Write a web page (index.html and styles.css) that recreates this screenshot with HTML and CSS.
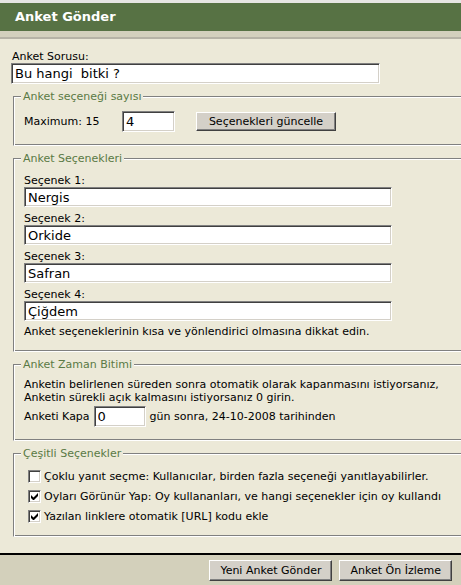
FILE: index.html
```html
<!DOCTYPE html>
<html lang="tr">
<head>
<meta charset="utf-8">
<title>Anket Gönder</title>
<link rel="stylesheet" href="styles.css">
</head>
<body>
<div class="page">
  <div class="topline"></div>
  <div class="header"><h1 class="title">Anket Gönder</h1></div>
  <div class="band"></div>
  <div class="content">
    <div class="label">Anket Sorusu:</div>
    <input class="field field-question" type="text" value="Bu hangi  bitki ?">

    <fieldset class="fs fs-count">
      <legend class="legend">Anket seçeneği sayısı</legend>
      <div class="count-row">
        <span class="count-text">Maximum: 15</span>
        <input class="field field-small" type="text" value="4">
        <button class="btn btn-update" type="button">Seçenekleri güncelle</button>
      </div>
    </fieldset>

    <fieldset class="fs fs-options">
      <legend class="legend">Anket Seçenekleri</legend>
      <div class="opt-label">Seçenek 1:</div>
      <input class="field field-option" type="text" value="Nergis">
      <div class="opt-label">Seçenek 2:</div>
      <input class="field field-option" type="text" value="Orkide">
      <div class="opt-label">Seçenek 3:</div>
      <input class="field field-option" type="text" value="Safran">
      <div class="opt-label">Seçenek 4:</div>
      <input class="field field-option" type="text" value="Çiğdem">
      <div class="note">Anket seçeneklerinin kısa ve yönlendirici olmasına dikkat edin.</div>
    </fieldset>

    <fieldset class="fs fs-time">
      <legend class="legend">Anket Zaman Bitimi</legend>
      <div class="time-text">Anketin belirlenen süreden sonra otomatik olarak kapanmasını istiyorsanız,<br>Anketin sürekli açık kalmasını istiyorsanız 0 girin.</div>
      <div class="time-row">
        <span>Anketi Kapa</span>
        <input class="field field-small field-days" type="text" value="0">
        <span>gün sonra, 24-10-2008 tarihinden</span>
      </div>
    </fieldset>

    <fieldset class="fs fs-misc">
      <legend class="legend">Çeşitli Seçenekler</legend>
      <div class="check-row">
        <span class="check"></span>
        <span>Çoklu yanıt seçme: Kullanıcılar, birden fazla seçeneği yanıtlayabilirler.</span>
      </div>
      <div class="check-row">
        <span class="check"><svg class="tick" viewBox="0 0 7 7" width="7" height="7"><path d="M0 2v3l2 2h1l4-4V0L2.5 4.5z" fill="#000"/></svg></span>
        <span>Oyları Görünür Yap: Oy kullananları, ve hangi seçenekler için oy kullandı</span>
      </div>
      <div class="check-row">
        <span class="check"><svg class="tick" viewBox="0 0 7 7" width="7" height="7"><path d="M0 2v3l2 2h1l4-4V0L2.5 4.5z" fill="#000"/></svg></span>
        <span>Yazılan linklere otomatik [URL] kodu ekle</span>
      </div>
    </fieldset>
  </div>
  <div class="footer">
    <button class="btn btn-foot" type="button">Yeni Anket Gönder</button>
    <button class="btn btn-foot" type="button">Anket Ön İzleme</button>
  </div>
</div>
</body>
</html>
```

FILE: styles.css
```css
html, body {
  margin: 0;
  padding: 0;
  background: #d3d0bb;
}
body {
  font-family: "DejaVu Sans", Verdana, sans-serif;
  font-size: 11px;
  line-height: 13px;
  color: #000;
  overflow: hidden;
}
.page {
  width: 461px;
  height: 585px;
  overflow: hidden;
  background: #ece9d8;
}
.topline {
  height: 3px;
  background: #e6e6e3;
}
.header {
  height: 28px;
  background: #577244;
  display: flex;
  align-items: center;
  padding-left: 15px;
}
.title {
  margin: 0;
  font-size: 13px;
  font-weight: bold;
  color: #fff;
  line-height: 16px;
}
.band {
  height: 6px;
  background: #d3d0bd;
  border-bottom: 2px solid #b6b3a6;
}
.content {
  padding: 11px 0 16px 0;
  background: #ece9d8;
}
.label {
  margin-left: 12px;
  height: 13px;
}
.field {
  display: block;
  box-sizing: border-box;
  height: 21px;
  margin: 0;
  padding: 0 3px;
  font-family: "DejaVu Sans", Verdana, sans-serif;
  font-size: 13px;
  color: #000;
  background: #fff;
  border: 1px solid;
  border-color: #808080 #fff #fff #808080;
  box-shadow: inset 1px 1px 0 #404040, inset -1px -1px 0 #d4d0c8;
  outline: none;
}
.field-question {
  margin-left: 11px;
  width: 369px;
}
.fs {
  box-sizing: border-box;
  width: 480px;
  min-width: 0;
  margin: 6px 0 0 13px;
  padding: 0 0 13px 10px;
  border: 1px solid;
  border-color: #808080 #fff #fff #808080;
  box-shadow: inset 1px 1px 0 #fff, inset -1px -1px 0 #808080;
}
.legend {
  padding: 0 2px;
  margin-left: -3px;
  color: #5a7a45;
  line-height: 13px;
  background: #ece9d8;
}
.count-row {
  display: flex;
  align-items: center;
  height: 21px;
  margin-top: 8px;
}
.count-text {
  width: 98px;
}
.field-small {
  width: 53px;
}
.btn {
  box-sizing: border-box;
  height: 19px;
  margin: 0;
  padding: 0 8px;
  font-family: "DejaVu Sans", Verdana, sans-serif;
  font-size: 11px;
  line-height: 13px;
  color: #000;
  background: #d4d0c8;
  border: 1px solid;
  border-color: #fff #404040 #404040 #fff;
  box-shadow: inset -1px -1px 0 #808080;
}
.btn-update {
  margin-left: 21px;
  width: 140px;
}
.opt-label {
  margin-top: 5px;
  height: 13px;
}
.opt-label:first-of-type {
  margin-top: 9px;
}
.field-option {
  width: 368px;
  height: 20px;
}
.note {
  margin-top: 4px;
  white-space: nowrap;
}
.time-text {
  margin-top: 7px;
  white-space: nowrap;
}
.time-row {
  display: flex;
  align-items: center;
  gap: 4px;
  margin-top: 2px;
  white-space: nowrap;
}
.field-days {
  width: 52px;
}
.fs-misc {
  padding-bottom: 10px;
}
.fs-misc .legend {
  margin-bottom: 6px;
}
.check-row {
  display: flex;
  align-items: center;
  height: 20px;
  white-space: nowrap;
}
.check {
  box-sizing: border-box;
  width: 13px;
  height: 13px;
  margin: 0 3px 0 4px;
  background: #fff;
  border: 1px solid;
  border-color: #808080 #fff #fff #808080;
  box-shadow: inset 1px 1px 0 #404040, inset -1px -1px 0 #d4d0c8;
  display: flex;
  align-items: center;
  justify-content: center;
  flex: none;
}
.tick {
  display: block;
}
.footer {
  border-top: 2px solid #000;
  background: #d3d0bb;
  height: 40px;
  display: flex;
  justify-content: flex-end;
  align-items: flex-start;
  gap: 7px;
  padding: 5px 9px 0 0;
}
.btn-foot {
  height: 21px;
  padding: 0 10px;
}
```
